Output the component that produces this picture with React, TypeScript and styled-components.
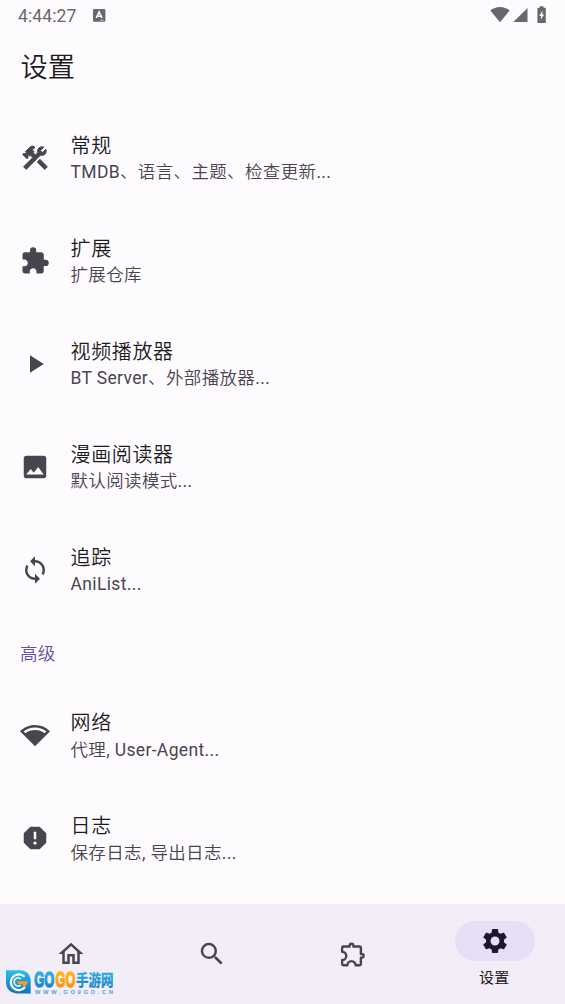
import type { ReactNode } from "react";
import styled, { createGlobalStyle } from "styled-components";
import {
    MdConstruction,
    MdExtension,
    MdImage,
    MdNetworkWifi,
    MdOutlineHome,
    MdPlayArrow,
    MdReport,
    MdSearch,
    MdSettings,
    MdSync,
} from "react-icons/md";

const GlobalStyle = createGlobalStyle`
    * {
        box-sizing: border-box;
    }
    body {
        margin: 0;
        background: #fefbff;
        font-family: Roboto, "Noto Sans CJK SC", sans-serif;
    }
    h1, h2, h3, p, ul {
        margin: 0;
        padding: 0;
        font-weight: 350;
        list-style: none;
    }
    svg {
        display: block;
    }
`;

const Screen = styled.div`
    position: relative;
    width: 565px;
    height: 1004px;
    display: flex;
    flex-direction: column;
    overflow: hidden;
    background: #fefbff;
`;

const StatusBar = styled.header`
    height: 30px;
    padding: 0 18px 0 18px;
    display: flex;
    align-items: center;
    color: #69676b;
`;

const Clock = styled.span`
    width: 75px;
    font-size: 17.5px;
    line-height: 30px;
    padding-top: 2px;
    letter-spacing: 0.1px;
    white-space: nowrap;
`;

const StatusIcons = styled.div`
    margin-left: auto;
    display: flex;
    align-items: center;
`;

const Title = styled.h1`
    height: 76.5px;
    padding: 0 20.5px;
    font-size: 27.2px;
    line-height: 76px;
    color: #1c1b1f;
`;

const List = styled.ul`
    display: flex;
    flex-direction: column;
`;

const Item = styled.li`
    height: 103px;
    padding-left: 20px;
    display: flex;
    align-items: center;
    gap: 20.5px;
    color: #49454f;
`;

const ItemText = styled.div`
    padding-top: 1px;
    display: flex;
    flex-direction: column;
    white-space: nowrap;
`;

const ItemTitle = styled.h3`
    margin-bottom: -0.5px;
    font-size: 20px;
    line-height: 28px;
    letter-spacing: 0.65px;
    color: #1c1b1f;
`;

const ItemSubtitle = styled.p`
    font-size: 17.5px;
    line-height: 26px;
    letter-spacing: 0.35px;
`;

const Latin = styled.span`
    font-weight: 400;
`;

const SectionTitle = styled.h2`
    height: 62.4px;
    padding-left: 20px;
    font-size: 17.5px;
    line-height: 64px;
    letter-spacing: 0.3px;
    color: #6750a4;
`;

const NavBar = styled.nav`
    height: 100px;
    margin-top: auto;
    display: grid;
    grid-template-columns: repeat(4, 1fr);
    background: #f2edf6;
`;

const NavItem = styled.div<{ $active?: boolean }>`
    display: flex;
    flex-direction: column;
    align-items: center;
    padding-top: ${(props) => (props.$active ? 17 : 29.5)}px;
    padding-left: ${(props) => (props.$active ? 1 : 0)}px;
    color: ${(props) => (props.$active ? "#1d192b" : "#49454f")};
`;

const Pill = styled.div<{ $active?: boolean }>`
    width: 80px;
    height: 40px;
    display: flex;
    align-items: center;
    justify-content: center;
    border-radius: 20px;
    background: ${(props) => (props.$active ? "#e6dff7" : "transparent")};
`;

const NavLabel = styled.span`
    font-size: 15px;
    font-weight: 400;
    line-height: 20px;
    margin-top: 7px;
    margin-right: 1px;
    letter-spacing: 0.3px;
    color: #1c1b1f;
`;

const Tools = styled(MdConstruction)`
    stroke: currentColor;
    stroke-width: 0.7;
    stroke-linejoin: round;

    path[fill="none"] {
        stroke: none;
    }
`;

const Watermark = styled.div`
    position: absolute;
    left: 5px;
    top: 968px;
    display: flex;
`;

interface Entry {
    icon: ReactNode;
    title: string;
    subtitle: string;
}

const general: Entry[] = [
    { icon: <Tools size={30} />, title: "常规", subtitle: "TMDB、语言、主题、检查更新..." },
    { icon: <MdExtension size={30} />, title: "扩展", subtitle: "扩展仓库" },
    { icon: <MdPlayArrow size={30} />, title: "视频播放器", subtitle: "BT Server、外部播放器..." },
    { icon: <MdImage size={30} />, title: "漫画阅读器", subtitle: "默认阅读模式..." },
    { icon: <MdSync size={30} />, title: "追踪", subtitle: "AniList..." },
];

const advanced: Entry[] = [
    { icon: <MdNetworkWifi size={30} />, title: "网络", subtitle: "代理, User-Agent..." },
    { icon: <MdReport size={30} />, title: "日志", subtitle: "保存日志, 导出日志..." },
];

// latin runs keep the regular weight next to the lighter chinese text
function mixed(text: string) {
    return text
        .split(/([\x20-\x7e]+)/)
        .filter(Boolean)
        .map((part, index) => (/^[\x20-\x7e]/.test(part) ? <Latin key={index}>{part}</Latin> : part));
}

function Entries({ items }: { items: Entry[] }) {
    return (
        <List>
            {items.map((item) => (
                <Item key={item.title}>
                    {item.icon}
                    <ItemText>
                        <ItemTitle>{item.title}</ItemTitle>
                        <ItemSubtitle>{mixed(item.subtitle)}</ItemSubtitle>
                    </ItemText>
                </Item>
            ))}
        </List>
    );
}

function KeyboardBadge() {
    return (
        <svg width="13" height="13" viewBox="0 0 13 13">
            <rect width="12.4" height="12.8" rx="1.2" fill="#69676b" />
            <path d="M3.2 9 6.1 2.8 9 9M4.3 7.2h3.6" fill="none" stroke="#fefbff" strokeWidth="1.6" />
            <path d="M6.8 11.3h4" stroke="#c9c7cb" strokeWidth="0.9" />
        </svg>
    );
}

function Signals() {
    return (
        <svg width="57" height="18" viewBox="0 0 57 18" fill="#69676b">
            <path d="M.3 4.6C5.5-.1 14.5-.1 19.7 4.6L10 16.2z" />
            <path d="M37.5 2v14H23.3z" />
            <path d="M48.2 1.8h1.5V.2h3.8v1.6H55q.8 0 .8.8v13.6q0 .8-.8.8h-6.8q-.8 0-.8-.8V2.6q0-.8.8-.8z" />
            <path d="M52.6 4.5 49.2 10h2.1l-.8 4 3.7-5.6h-2.1z" fill="#fefbff" />
        </svg>
    );
}

function PuzzleOutline() {
    return (
        <svg width="30" height="30" viewBox="0 0 24 24" fill="none" stroke="currentColor" strokeWidth="1.9" strokeLinejoin="round">
            <path
                transform="translate(.3 1)"
                d="M4 5h5v-.7a1.5 1.5 0 0 1 3 0V5h5a1 1 0 0 1 1 1v5h.7a1.5 1.5 0 0 1 0 3H18v5a1 1 0 0 1-1 1h-3.2a3.3 3.3 0 0 0-6.6 0H4a1 1 0 0 1-1-1v-3.2a3.3 3.3 0 0 0 0-6.6V6a1 1 0 0 1 1-1z"
            />
        </svg>
    );
}

function Logo() {
    return (
        <svg width="115" height="30" viewBox="0 0 115 30">
            <defs>
                <linearGradient id="blue" x1="0" y1="0" x2="0" y2="1">
                    <stop offset="0" stopColor="#2bbdf0" />
                    <stop offset="1" stopColor="#0c74bf" />
                </linearGradient>
                <linearGradient id="orange" x1="0" y1="0" x2="0" y2="1">
                    <stop offset="0" stopColor="#ffc20c" />
                    <stop offset="1" stopColor="#f58712" />
                </linearGradient>
            </defs>
            <path d="M1 2.2h13.5c7 0 11.2 4.5 11.2 11v12.2H13C5.5 25.4 1 21 1 14z" fill="url(#blue)" />
            <path d="M19.5 8.8A7.9 7.9 0 1 0 20 19" fill="none" stroke="#fff" strokeWidth="2.2" />
            <path d="M16 11.2A4 4 0 1 0 15.8 17" fill="none" stroke="#d9f4ff" strokeWidth="1.8" />
            <path d="M11.5 13.2h11.3c-.2 2.5-1.5 4.4-3.3 5.8l-2.5-3h-4z" fill="#f99b1c" />
            <g fontFamily="'Liberation Sans', Arial, sans-serif" fontWeight="700" fontSize="21.5" strokeWidth="1.3">
                <text x="29.3" y="19.3" textLength="20" lengthAdjust="spacingAndGlyphs" fill="url(#blue)" stroke="url(#blue)">GO</text>
                <text x="50.6" y="19.3" textLength="19.8" lengthAdjust="spacingAndGlyphs" fill="url(#orange)" stroke="url(#orange)">GO</text>
            </g>
            <text x="71" y="18.2" fontFamily="'Noto Sans CJK SC', sans-serif" fontWeight="700" fontSize="16" textLength="37.5" lengthAdjust="spacingAndGlyphs" fill="url(#blue)" stroke="url(#blue)" strokeWidth="0.3">手游网</text>
            <text x="30" y="26" fontFamily="'Liberation Sans', Arial, sans-serif" fontWeight="700" fontSize="5.8" textLength="78" fill="#4fa3d8">WWW.GO9GO.CN</text>
        </svg>
    );
}

function App() {
    return (
        <Screen>
            <GlobalStyle />
            <StatusBar>
                <Clock>4:44:27</Clock>
                <KeyboardBadge />
                <StatusIcons>
                    <Signals />
                </StatusIcons>
            </StatusBar>
            <Title>设置</Title>
            <Entries items={general} />
            <SectionTitle>高级</SectionTitle>
            <Entries items={advanced} />
            <NavBar>
                <NavItem>
                    <Pill><MdOutlineHome size={30} /></Pill>
                </NavItem>
                <NavItem>
                    <Pill><MdSearch size={30} /></Pill>
                </NavItem>
                <NavItem>
                    <Pill><PuzzleOutline /></Pill>
                </NavItem>
                <NavItem $active>
                    <Pill $active><MdSettings size={30} /></Pill>
                    <NavLabel>设置</NavLabel>
                </NavItem>
            </NavBar>
            <Watermark>
                <Logo />
            </Watermark>
        </Screen>
    );
}

export default App;
